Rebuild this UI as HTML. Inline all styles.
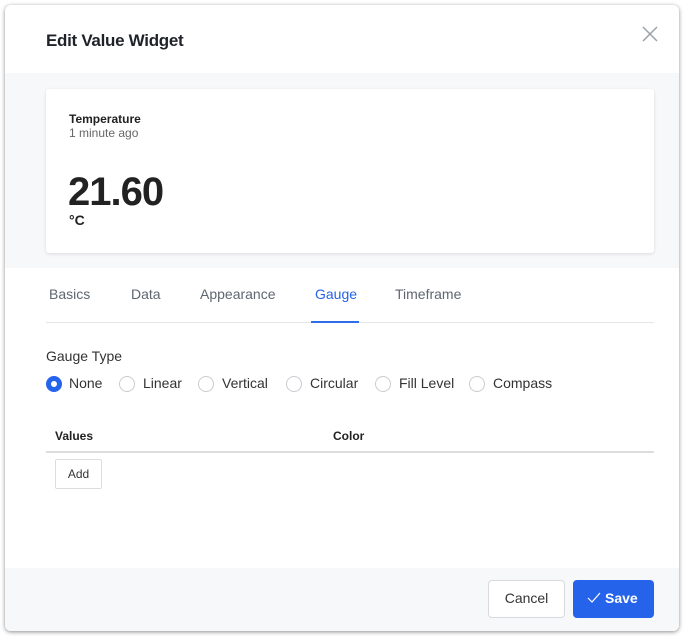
<!DOCTYPE html>
<html><head><style>
*{box-sizing:border-box;margin:0;padding:0}
body{width:687px;height:639px;background:#fff;font-family:"Liberation Sans",sans-serif;position:relative;overflow:hidden}
.dlg{position:absolute;left:5px;top:5px;width:674px;height:626px;background:#fff;border-radius:6px;box-shadow:0 1px 4px rgba(0,0,0,.45);overflow:hidden}
.a{position:absolute;white-space:nowrap}
.radio{position:absolute;top:371px;width:16px;height:16px;border:1px solid #c9ccd1;border-radius:50%;background:#fff}
.radio.on{border:5px solid #2563eb}
.rl{position:absolute;top:370px;font-size:14px;color:#333}
.tab{position:absolute;top:281px;font-size:14px;color:#5f6670}
</style></head><body>
<div class="dlg">
<div class="a" style="left:41px;top:26px;font-size:17px;color:#1f2329;font-weight:bold;letter-spacing:-0.3px">Edit Value Widget</div>
<svg class="a" style="left:636px;top:20px" width="18" height="18" viewBox="0 0 18 18"><path d="M2 2L16 16M16 2L2 16" stroke="#9aa0a8" stroke-width="1.5"/></svg>
<div class="a" style="left:0;top:68px;width:674px;height:195px;background:#f7f8fa"></div>
<div class="a" style="left:41px;top:84px;width:608px;height:164px;background:#fff;border-radius:3px;box-shadow:0 1px 3px rgba(0,0,0,.12)"></div>
<div class="a" style="left:64px;top:107px;font-size:12px;font-weight:bold;color:#222">Temperature</div>
<div class="a" style="left:64px;top:121px;font-size:12px;color:#666">1 minute ago</div>
<div class="a" style="left:63px;top:165px;font-size:40px;font-weight:bold;color:#222;letter-spacing:-1px">21.60</div>
<div class="a" style="left:64px;top:207px;font-size:14px;font-weight:bold;color:#222">°C</div>
<div class="tab" style="left:44px">Basics</div>
<div class="tab" style="left:126px">Data</div>
<div class="tab" style="left:195px">Appearance</div>
<div class="tab" style="left:310px;color:#2563eb">Gauge</div>
<div class="tab" style="left:390px">Timeframe</div>
<div class="a" style="left:41px;top:317px;width:608px;height:1px;background:#e3e5e8"></div>
<div class="a" style="left:306px;top:316px;width:48px;height:2px;background:#2f6ee8"></div>
<div class="a" style="left:41px;top:343px;font-size:14px;color:#333">Gauge Type</div>
<div class="radio on" style="left:41px"></div><div class="rl" style="left:64px">None</div>
<div class="radio" style="left:114px"></div><div class="rl" style="left:138px">Linear</div>
<div class="radio" style="left:193px"></div><div class="rl" style="left:217px">Vertical</div>
<div class="radio" style="left:281px"></div><div class="rl" style="left:305px">Circular</div>
<div class="radio" style="left:370px"></div><div class="rl" style="left:394px">Fill Level</div>
<div class="radio" style="left:464px"></div><div class="rl" style="left:488px">Compass</div>
<div class="a" style="left:50px;top:424px;font-size:12px;font-weight:bold;color:#222">Values</div>
<div class="a" style="left:328px;top:424px;font-size:12px;font-weight:bold;color:#222">Color</div>
<div class="a" style="left:41px;top:446px;width:608px;height:2px;background:#ddd"></div>
<div class="a" style="left:50px;top:454px;width:47px;height:30px;border:1px solid #ddd;border-radius:2px;font-size:12px;color:#333;text-align:center;line-height:28px">Add</div>
<div class="a" style="left:0;top:563px;width:674px;height:63px;background:#f7f8fa"></div>
<div class="a" style="left:483px;top:575px;width:77px;height:38px;border:1px solid #d6d9de;border-radius:4px;background:#fff;font-size:14px;color:#333;text-align:center;line-height:34px">Cancel</div>
<div class="a" style="left:568px;top:575px;width:81px;height:38px;border-radius:4px;background:#2563eb;font-size:14px;font-weight:bold;color:#fff;line-height:36px;padding-left:14px"><svg width="14" height="12" viewBox="0 0 14 12" style="vertical-align:-1px;margin-right:4px"><path d="M1 6L5 10L13 1" stroke="#fff" stroke-width="1.2" fill="none"/></svg>Save</div>
</div>
</body></html>
